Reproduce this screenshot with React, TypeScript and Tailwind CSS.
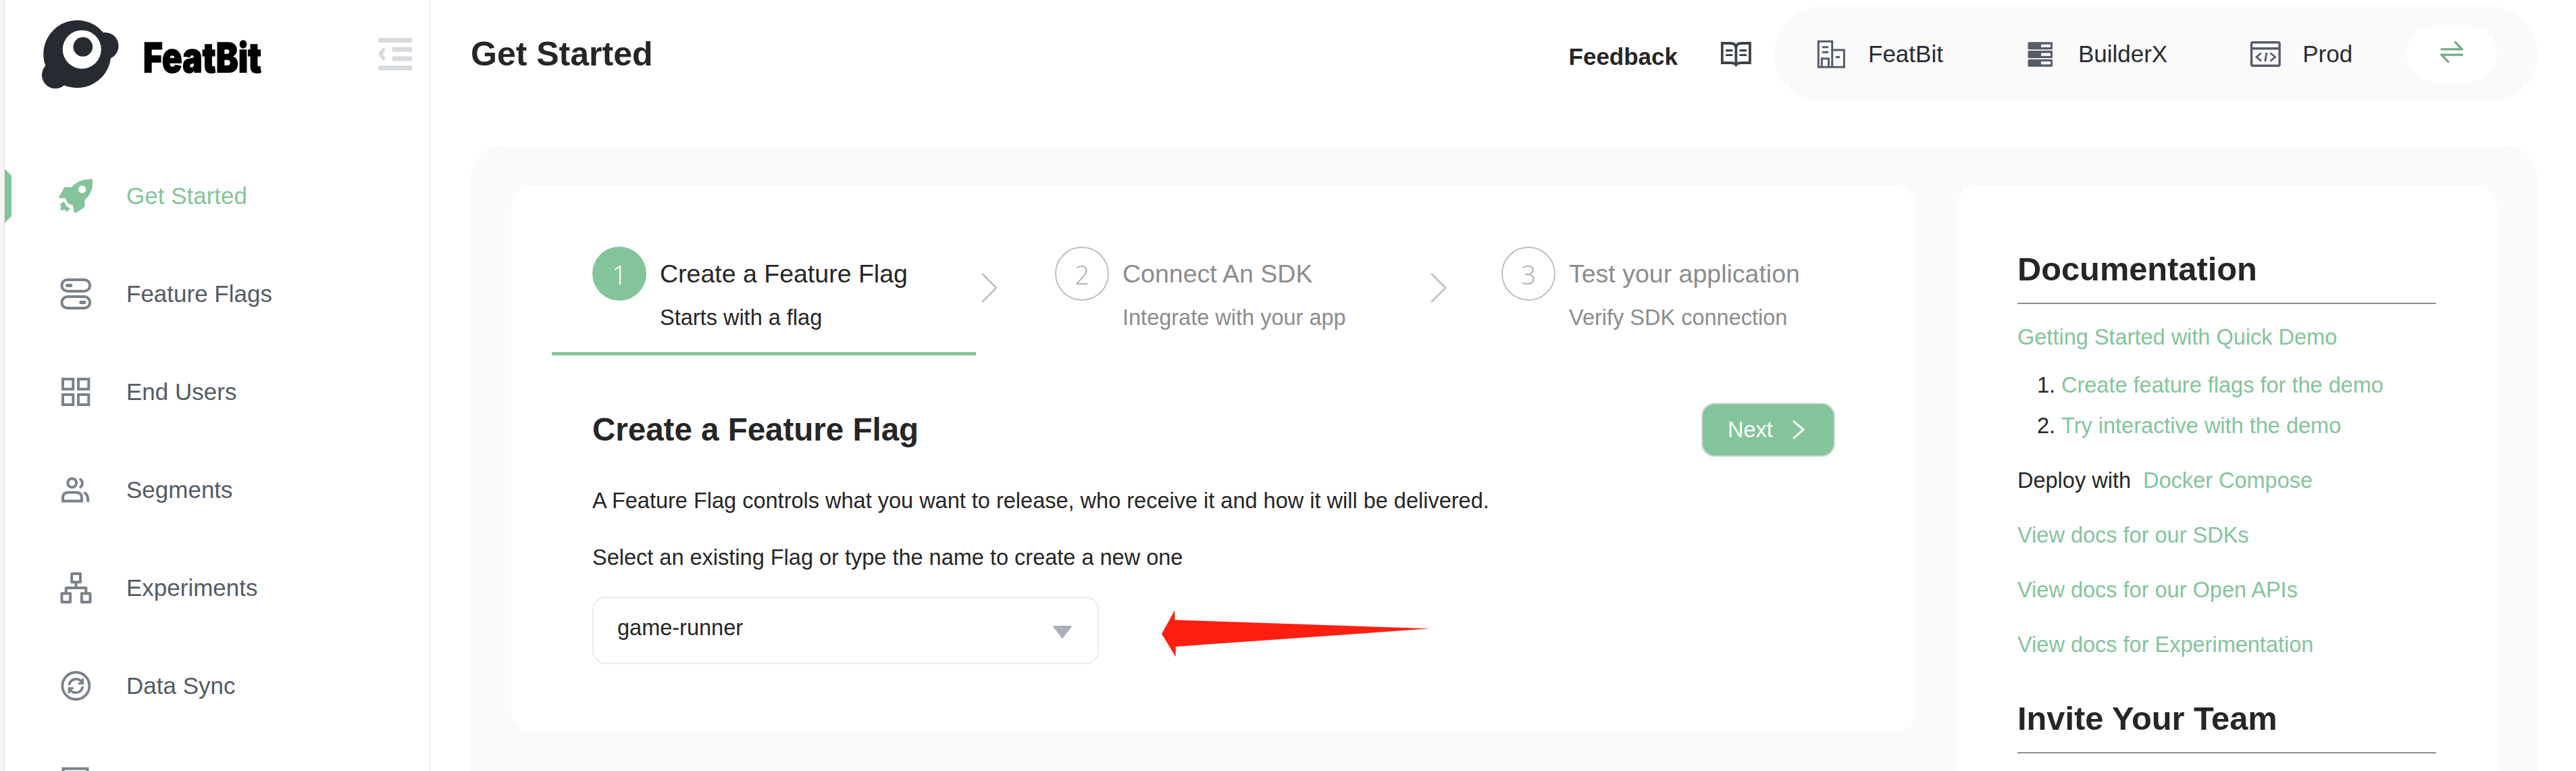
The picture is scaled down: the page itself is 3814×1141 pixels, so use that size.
import type { ReactNode } from "react";

const navItems: { label: string; icon: ReactNode; active?: boolean }[] = [
  {
    label: "Get Started",
    active: true,
    icon: (
      <svg viewBox="87 265 50 50" className="size-[50px] fill-[#84c49b]">
        <path
          fillRule="evenodd"
          d="M137.1 265.2C126 264.5 114 268 106 277L97.5 276.7Q95.5 276.7 94.5 278.4L87.6 290.5Q86.8 293 89.5 293.3L97.7 293.6C98.3 300 102.5 303 107.8 303.6L109.4 313.3Q110.5 316 113.2 314.6L124 307.4Q125.4 306.3 125.5 304.5L125.2 296C134 289 138.5 277 137.1 265.2ZM121.7 274.6a5.7 5.7 0 1 1 0 11.4a5.7 5.7 0 1 1 0-11.4Z"
        />
        <path d="M94 298.2L87.9 303.4L90.9 304.3L89.2 311L96.4 310.5L98.4 313.9L104.2 308.2Q98 306.5 97 301.4Z" />
      </svg>
    ),
  },
  {
    label: "Feature Flags",
    icon: (
      <svg viewBox="87 410 50 50" className="size-[50px] fill-none stroke-[#7b818c] stroke-[4]">
        <rect x="91.4" y="413.9" width="41.8" height="17" rx="8.5" />
        <rect x="91.4" y="439" width="41.8" height="17" rx="8.5" />
        <path d="M99.6 422.4H104.8M119.8 447.6H125" strokeWidth="5" strokeLinecap="round" />
      </svg>
    ),
  },
  {
    label: "End Users",
    icon: (
      <svg viewBox="87 555 50 50" className="size-[50px] fill-none stroke-[#7b818c] stroke-[4]">
        <rect x="93" y="561" width="15.3" height="14.9" />
        <rect x="116" y="561" width="15.3" height="14.9" />
        <rect x="93" y="584" width="15.3" height="14.9" />
        <rect x="116" y="584" width="15.3" height="14.9" />
      </svg>
    ),
  },
  {
    label: "Segments",
    icon: (
      <svg viewBox="87 700 50 50" className="size-[50px] fill-none stroke-[#7b818c] stroke-[4]" strokeLinecap="round">
        <circle cx="106.7" cy="714.8" r="6.5" />
        <path d="M119.2 709.5A7 7 0 0 1 119.2 720.6M93 741.6V737Q93 728.7 101 728.7H113Q121 728.7 121 737V741.6ZM125.7 729.7Q130.3 732 130.3 741.3" />
      </svg>
    ),
  },
  {
    label: "Experiments",
    icon: (
      <svg viewBox="87 845 50 50" className="size-[50px] fill-none stroke-[#7b818c] stroke-[4]" strokeLinejoin="round">
        <rect x="106.2" y="849" width="12.8" height="12.6" />
        <rect x="91.5" y="878.2" width="12.6" height="12.8" />
        <rect x="120.9" y="878.2" width="12.6" height="12.8" />
        <path d="M112.5 862V870M97.8 878V870H127.3V878" />
      </svg>
    ),
  },
  {
    label: "Data Sync",
    icon: (
      <svg viewBox="87 990 50 50" className="size-[50px] fill-none stroke-[#7b818c] stroke-[3.8]" strokeLinecap="round">
        <circle cx="112.4" cy="1015" r="20" />
        <path d="M102.6 1012.6A10.2 10.2 0 0 1 121.4 1010.2M122.2 1017.4A10.2 10.2 0 0 1 103.4 1019.8" />
        <path d="M122.6 1005V1011.4H117M102.2 1025V1018.6H107.8" strokeWidth="3" />
      </svg>
    ),
  },
  {
    label: "",
    icon: (
      <svg viewBox="87 1135 50 50" className="size-[50px] fill-none stroke-[#7b818c] stroke-[4]">
        <rect x="93.5" y="1137.5" width="36" height="44" />
      </svg>
    ),
  },
];

function Sidebar() {
  return (
    <aside className="flex h-full w-[631px] shrink-0 flex-col border-r-2 border-[#f0f0f0] bg-white">
      <div className="flex h-[160px] shrink-0 items-center pl-[55px]">
        <svg viewBox="62 29 114 103" className="h-[103px] w-[114px] shrink-0 fill-[#272a31]">
          <circle cx="114.3" cy="80" r="50" />
          <circle cx="155.5" cy="68" r="20" />
          <circle cx="82" cy="111" r="20" />
          <circle cx="121.3" cy="73.2" r="28.5" fill="#fff" />
          <circle cx="122.8" cy="69.3" r="14.3" />
        </svg>
        <svg viewBox="0 0 190 100" className="ml-[35px] mt-[10px] h-[100px] w-[190px] shrink-0">
          <text
            x="1"
            y="71.5"
            textLength="175"
            lengthAdjust="spacingAndGlyphs"
            strokeWidth="1.5"
            className="fill-black stroke-black font-[Inter] text-[61px] font-black"
          >
            FeatBit
          </text>
        </svg>
        <svg viewBox="561 56 51 48" className="ml-[159px] h-[48px] w-[51px] shrink-0 fill-[#d7dbe0]">
          <rect x="561" y="56" width="50.5" height="7" rx="2.5" />
          <rect x="581.5" y="69.7" width="30" height="7" rx="2.5" />
          <rect x="581.5" y="83.2" width="30" height="7" rx="2.5" />
          <rect x="561" y="97" width="50.5" height="7" rx="2.5" />
          <path d="M568.8 73.5L564 80L568.8 86.5" className="fill-none stroke-[#d7dbe0]" strokeWidth="5" strokeLinecap="round" strokeLinejoin="round" />
        </svg>
      </div>
      <nav className="mt-[57.5px] flex shrink-0 flex-col">
        {navItems.map((item, i) => (
          <a key={i} className="flex h-[145px] items-center">
            {item.active ? (
              <svg viewBox="0 0 10 80" className="h-[80px] w-[10px] fill-[#84c49b]">
                <path d="M0 0L10 10V70L0 80Z" />
              </svg>
            ) : (
              <span className="w-[10px]" />
            )}
            <span className="ml-[70px]">{item.icon}</span>
            <span className={item.active ? "ml-[50px] text-[35px] text-[#84c49b]" : "ml-[50px] text-[35px] text-[#535b66]"}>
              {item.label}
            </span>
          </a>
        ))}
      </nav>
    </aside>
  );
}

function Header() {
  return (
    <header className="flex h-[160px] items-center">
      <h1 className="grow text-[50px] font-bold">Get Started</h1>
      <a className="mt-[8px] text-[35px] font-bold">Feedback</a>
      <svg viewBox="2547 60 47 42" className="ml-[63px] h-[42px] w-[47px] fill-none stroke-[#3d4249] stroke-[3.8]">
        <path d="M2549.8 65H2563Q2570.3 65.5 2570.3 72Q2570.3 65.5 2577.6 65H2590.9V94H2578Q2572.5 94 2570.3 97Q2568.2 94 2562.7 94H2549.8ZM2570.3 70V97" />
        <path d="M2555 75.6H2565.3M2555 82.5H2565.3M2575.6 75.6H2586M2575.6 82.5H2586" strokeWidth="3.2" />
      </svg>
      <div className="ml-[33px] flex h-[140px] w-[1130px] items-center rounded-full bg-[#fafafa] pl-[63px] pr-[60px] text-[35px] text-[#272b31]">
        <svg viewBox="2690 59 43 42" className="h-[42px] w-[43px] fill-none stroke-[#565c68] stroke-[3]">
          <path d="M2692.3 99.2V61.3H2712.7V99.2ZM2712.7 74H2730.4V99.2H2712.7" />
          <path d="M2697.3 99V86.8H2707.5V99" />
          <path d="M2699 69.7H2706M2699 77.2H2706M2719 84.6H2723" strokeLinecap="round" />
        </svg>
        <span className="ml-[33px]">FeatBit</span>
        <svg viewBox="3002 62 38 39" className="ml-[125px] h-[39px] w-[38px] fill-[#565c68]">
          <rect x="3002.5" y="63.3" width="36.5" height="11" rx="1.5" />
          <rect x="3002.5" y="76" width="36.5" height="11" rx="1.5" />
          <rect x="3002.5" y="88.7" width="36.5" height="11" rx="1.5" />
          <path d="M3022 66.7h14v4.3h-14zM3022 79.4h14v4.3h-14zM3022 92h14v4.3h-14z" fill="#fafafa" />
        </svg>
        <span className="ml-[37px]">BuilderX</span>
        <svg viewBox="3331 60 47 40" className="ml-[122px] h-[40px] w-[47px] fill-none stroke-[#565c68] stroke-[3.4]">
          <rect x="3333.5" y="62.8" width="41.6" height="34.4" rx="2" />
          <path d="M3333 71.7H3375" />
          <path d="M3348 78.5L3341 84.2L3348 90.5M3361.5 78.5L3368.5 84.2L3361.5 90.5M3355.8 78L3353.8 91" strokeWidth="2.8" />
        </svg>
        <span className="ml-[31px]">Prod</span>
        <button className="ml-auto flex h-[80px] w-[134px] items-center justify-center rounded-full bg-white">
          <svg viewBox="3614 59 34 34" className="-mt-[7px] h-[34px] w-[34px] fill-none stroke-[#72ab84] stroke-[3.3]">
            <path d="M3614.5 71.8H3646L3635.5 60.5M3647.7 80.2H3616.2L3626.7 91.5" />
          </svg>
        </button>
      </div>
    </header>
  );
}

function Step({ n, title, sub, active }: { n: number; title: string; sub: string; active?: boolean }) {
  return (
    <div className="flex">
      <div
        className={
          active
            ? "flex size-[80px] items-center justify-center rounded-full bg-[#84c49b] pt-[3px] font-['Open_Sans'] text-[38px] font-light text-white"
            : "flex size-[80px] items-center justify-center rounded-full border-[2.5px] border-[#bfbfbf] pt-[3px] font-['Open_Sans'] text-[38px] font-light text-[#adadad]"
        }
      >
        {n}
      </div>
      <div className={active ? "ml-[20px] whitespace-nowrap text-[#262626]" : "ml-[20px] whitespace-nowrap text-[#8c8c8c]"}>
        <div className="text-[37.5px] leading-[80px]">{title}</div>
        <div className="text-[32.5px] leading-[50px]">{sub}</div>
      </div>
    </div>
  );
}

function StepArrow() {
  return (
    <svg viewBox="0 0 24 44" className="mt-[39px] h-[44px] w-[24px] fill-none stroke-[#bfbfbf] stroke-[2.5]">
      <path d="M1.2 1L22.2 22L1.2 43" />
    </svg>
  );
}

function MainCard() {
  return (
    <section className="h-[808px] w-[2080px] rounded-[30px] bg-white pl-[60px] pt-[90px]">
      <div className="flex">
        <div className="h-[161px] w-[628px] border-b-[5px] border-[#84c49b] pl-[60px]">
          <Step n={1} active title="Create a Feature Flag" sub="Starts with a flag" />
        </div>
        <div className="ml-[8px]"><StepArrow /></div>
        <div className="ml-[85px] w-[556px]">
          <Step n={2} title="Connect An SDK" sub="Integrate with your app" />
        </div>
        <StepArrow />
        <div className="ml-[81px]">
          <Step n={3} title="Test your application" sub="Verify SDK connection" />
        </div>
      </div>
      <div className="pl-[60px]">
        <div className="mt-[70px] flex h-[80px] items-center justify-between pr-[120px]">
          <h2 className="text-[47.5px] font-bold">Create a Feature Flag</h2>
          <button className="flex h-[80px] w-[198px] items-center rounded-[20px] border-2 border-[#d5d9d6] bg-[#84c49b] pl-[37px] text-[32.5px] text-white shadow-[0_5px_0_rgba(0,0,0,0.015)]">
            Next
            <svg viewBox="0 0 20 30" className="ml-[28px] h-[30px] w-[20px] fill-none stroke-white stroke-3">
              <path d="M2 2L17 14.7L2 28" />
            </svg>
          </button>
        </div>
        <p className="mt-[40px] text-[32.5px] leading-[50px]">
          A Feature Flag controls what you want to release, who receive it and how it will be delivered.
        </p>
        <p className="mt-[34px] text-[32.5px] leading-[50px]">Select an existing Flag or type the name to create a new one</p>
        <div className="mt-[33px] flex">
          <div className="flex h-[100px] w-[750px] items-center justify-between rounded-[20px] border-2 border-[#ebebeb] pl-[35px] pr-[38px]">
            <span className="-mt-[7px] text-[32.5px]">game-runner</span>
            <svg viewBox="0 0 28 19" className="mt-[5px] h-[19px] w-[28px] fill-[#a9afb9]">
              <path d="M1.5 0H26.5Q28.5 0.5 27.3 2.2L14 19L0.7 2.2Q-0.5 0.5 1.5 0Z" />
            </svg>
          </div>
          <svg viewBox="1720 903 398 70" className="ml-[93px] mt-[20px] h-[70px] w-[398px] fill-[#ff1f12]">
            <path d="M1720 938L1739.2 903.3L1739.6 917.5L2117 930.3L1740.7 957L1740.7 972Z" />
          </svg>
        </div>
      </div>
    </section>
  );
}

function DocsCard() {
  return (
    <section className="h-[1000px] w-[800px] rounded-[30px] bg-white px-[90px] pt-[93px] text-[32.5px]">
      <h2 className="h-[82px] border-b-2 border-[#8b8f98] text-[48.75px] font-bold leading-[60px]">Documentation</h2>
      <a className="mt-[29px] block leading-[40px] text-[#84c49b]">Getting Started with Quick Demo</a>
      <ol className="mt-[21px] leading-[60px]">
        <li className="flex">
          <span className="w-[65px] pr-[9px] text-right">1.</span>
          <a className="text-[#84c49b]">Create feature flags for the demo</a>
        </li>
        <li className="flex">
          <span className="w-[65px] pr-[9px] text-right">2.</span>
          <a className="text-[#84c49b]">Try interactive with the demo</a>
        </li>
      </ol>
      <div className="mt-[11px] leading-[81px]">
        <div>
          Deploy with <a className="ml-[9px] text-[#84c49b]">Docker Compose</a>
        </div>
        <a className="block text-[#84c49b]">View docs for our SDKs</a>
        <a className="block text-[#84c49b]">View docs for our Open APIs</a>
        <a className="block text-[#84c49b]">View docs for Experimentation</a>
      </div>
      <h2 className="mt-[38px] h-[82px] border-b-2 border-[#8b8f98] text-[48.75px] font-bold leading-[60px]">Invite Your Team</h2>
    </section>
  );
}

export default function App() {
  return (
    <div className="flex h-[1141px] w-[3814px] overflow-hidden bg-white font-['Liberation_Sans',sans-serif] text-[#262626]">
      <div className="w-[7px] shrink-0 border-r border-[#e2e2e2] bg-[#f5f5f5]" />
      <Sidebar />
      <div className="ml-[59px] w-[3060px] shrink-0">
        <Header />
        <main className="mt-[55px] flex h-[1100px] gap-[60px] rounded-[50px] bg-[#fafafa] p-[60px]">
          <MainCard />
          <DocsCard />
        </main>
      </div>
    </div>
  );
}
